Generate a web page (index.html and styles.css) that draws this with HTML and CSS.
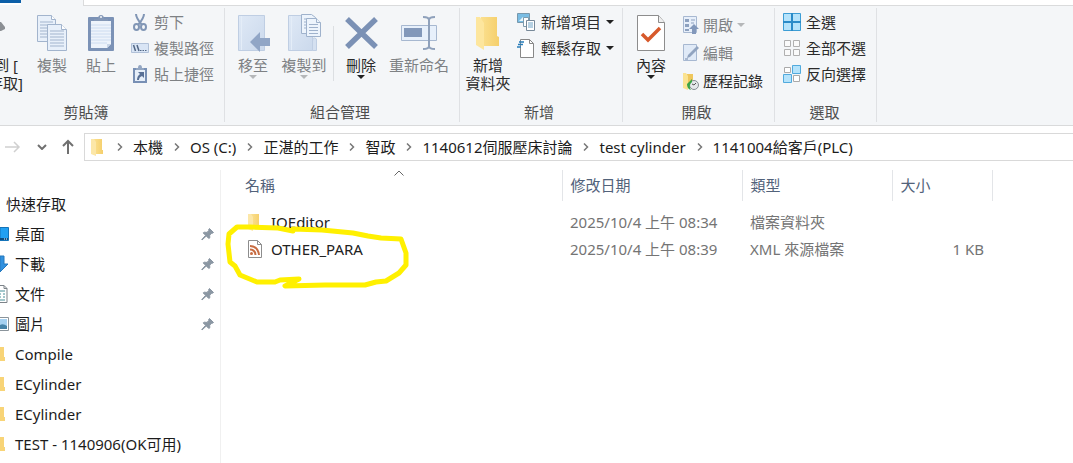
FILE: index.html
```html
<!DOCTYPE html>
<html lang="zh-Hant">
<head>
<meta charset="utf-8">
<title>1141004給客戶(PLC)</title>
<link rel="stylesheet" href="styles.css">
</head>
<body>
<svg class="defs" width="0" height="0" aria-hidden="true">
  <defs>
    <linearGradient id="gold" x1="0" x2="1"><stop offset="0" stop-color="#fbe08f"/><stop offset="1" stop-color="#f5cf6c"/></linearGradient>
    <linearGradient id="pale" x1="0" x2="1" y2="1"><stop offset="0" stop-color="#dfe9f6"/><stop offset="1" stop-color="#cbd9ec"/></linearGradient>
    <symbol id="folder" viewBox="0 0 16 18"><path d="M4 1h8v11h1v4H4z" fill="url(#gold)"/><path d="M1 1h3l2 3v14l-5-2z" fill="#fce7a8"/></symbol>
    <symbol id="pin" viewBox="0 0 14 14"><path d="M8.500 1.500 12.500 5.500 11.500 6.200 10.800 6 8.700 8.200 8.800 10.800 7.800 11.500 5.300 9 1 13 .8 12.600 4.600 8.300 2.200 5.900 3.200 5.200 6 5.400 8 3.200 7.700 2.300z" fill="#8b97a3" stroke="#8b97a3"/></symbol>
    <symbol id="chev" viewBox="0 0 6 8"><path d="M1 .5 4.500 4 1 7.500" fill="none" stroke="#777" stroke-width="1.500"/></symbol>
  </defs>
</svg>
<div class="window">
  <div class="tabs"><span class="tab-file"></span><span class="tab-active"></span><span class="tab-rest"></span></div>
  <div class="ribbon">
    <section class="group clipboard">
      <div class="tools">
        <button class="big pin-quick"><svg class="pic" width="24" height="38" viewBox="0 0 24 38"><path d="M0 8h2l4 5v2l-4 2H0z" fill="#8b8f94"/></svg><span class="short">到 [</span><span>存取]</span></button>
        <button class="big copy off"><svg class="pic" width="32" height="38" viewBox="0 0 32 38"><g fill="#e8f0fa" stroke="#a2b4cd"><path d="M1.500 1.500h14l4 4v22h-18z"/><path d="M15.500 1.500v4h4" fill="#fff"/><path d="M4 8h13M4 11h13M4 14h7M4 17h7M4 20h7M4 23h7"/><path d="M11.500 10.500h14l5 5v21h-19z"/><path d="M25.500 10.500v5h5" fill="#fff"/><path d="M14 17h14M14 20h14M14 23h14M14 26h14M14 29h14M14 32h14"/></g></svg><span>複製</span></button>
        <button class="big paste off"><svg class="pic" width="28" height="38" viewBox="0 0 28 38"><rect x="1" y="3" width="26" height="34" rx="1" fill="#7b92b6"/><path d="M4 7h20v23l-4 4H4z" fill="#edf3fb"/><path d="M24 30h-4v4z" fill="#c9d6e8"/><path d="M4 11h20M4 14h20M4 17h20M4 20h20M4 23h20M4 26h20M4 29h16" stroke="#cddcf0"/><path d="M7 7V5h4q0-4 3-4t3 4h4v2z" fill="#8498b7"/><circle cx="14" cy="3" r="1" fill="#f4f6f8"/></svg><span>貼上</span></button>
        <div class="stack">
          <button class="small off"><svg width="18" height="18" viewBox="0 0 18 18" fill="none" stroke="#8196b5" stroke-width="2"><path d="M5 1q0 4 6 11M13 1q0 4-6 11"/><ellipse cx="5.500" cy="14" rx="2.500" ry="3"/><ellipse cx="12.500" cy="14" rx="2.500" ry="3"/></svg>剪下</button>
          <button class="small off"><svg width="18" height="12" viewBox="0 0 18 12"><path d="M.5 1.500h17v9H.5z" fill="#d9e5f5" stroke="#b1c1d8"/><path d="m2.500 3 2 6m1.500-6 2 6" fill="none" stroke="#526785" stroke-width="1.500"/><path d="M9 8.500h1.500m1 0H13m1 0h1.500" stroke="#526785"/></svg>複製路徑</button>
          <button class="small off"><svg width="18" height="19" viewBox="0 0 18 19"><path d="M2 3h14v15H2z" fill="#7890b5"/><path d="M4 5h10v11H4z" fill="#e6effa"/><path d="M5 5V3h2q0-3 2-3t2 3h2v2z" fill="#93a6c2"/><path d="M7 7h6v6l-2-2q-3 1-3 4H6q0-4 3-6z" fill="#587096"/></svg>貼上捷徑</button>
        </div>
      </div>
      <div class="caption">剪貼簿</div>
    </section>
    <section class="group organize">
      <div class="tools">
        <button class="big w48 off"><svg class="pic" width="34" height="38" viewBox="0 0 34 38"><path d="M2.500 1.500h26v35h-26z" fill="url(#pale)" stroke="#bfcee3"/><path d="M5.500 2v34" stroke="#e4edf8"/><path d="m14 28 10-10v6h10v8H24v6z" fill="#91a6c6"/></svg><span>移至</span><i class="caret"></i></button>
        <button class="big w54 off"><svg class="pic" width="38" height="38" viewBox="0 0 38 38"><path d="M3.500 1.500h24v35h-24z" fill="url(#pale)" stroke="#bfcee3"/><path d="M6.500 2v34" stroke="#e4edf8"/><path d="M27.500 36.500h4V25q-4-3-4 2z" fill="#d4e0f0" stroke="#bfcee3"/><g fill="#edf4fc" stroke="#9fb2cc"><path d="M16.500.5h10l4 3v16h-14z"/><path d="M19 5h9M19 8h2M19 11h2M19 14h2"/><path d="M21.500 4.500h10l4 4v14h-14z"/><path d="M31.500 4.500v4h4"/><path d="M24 10.500h9M24 13.500h9M24 16.500h9M24 19.500h9"/></g></svg><span>複製到</span><i class="caret"></i></button>
        <span class="rule"></span>
        <button class="big w50"><svg class="pic" width="34" height="38" viewBox="0 0 34 38"><path d="M3 5 32 33M32 5 3 33" stroke="#7b91b5" stroke-width="5.500"/></svg><span>刪除</span><i class="caret"></i></button>
        <button class="big w66 off"><svg class="pic" width="38" height="38" viewBox="0 0 38 38"><path d="M1.500 11.500h35v15h-35z" fill="#e7f0fb" stroke="#a7b8d0"/><path d="M4 14h18v9H4z" fill="#8298ba"/><path d="M29 4v30M23 3q6 0 6 3 0-3 6-3M23 35q6 0 6-3 0 3 6 3" fill="none" stroke="#8fa1bb" stroke-width="2"/></svg><span>重新命名</span></button>
      </div>
      <div class="caption">組合管理</div>
    </section>
    <section class="group create">
      <div class="tools">
        <button class="big w50"><svg class="pic" width="26" height="38" viewBox="0 0 26 38"><path d="M6 3h16v19l2 1v9H6z" fill="url(#gold)"/><path d="M1 3h4l4 6v27l-8-5z" fill="#fde69e"/></svg><span>新增</span><span>資料夾</span></button>
        <div class="stack">
          <button class="small"><svg width="19" height="18" viewBox="0 0 19 18"><path d="M.5.5h12v9H.5z" fill="#79bde4" stroke="#7798ad"/><path d="m2 8 4-4 5 4z" fill="#e9f6fb"/><path d="M6.500 4.500h5v9h-5z" fill="#fff" stroke="#7d9caf"/><path d="M9.500 7.500h8v10h-8z" fill="#fff" stroke="#778999"/><path d="M11 10h5m-5 2h5m-5 2h5" stroke="#6ea4c7"/></svg>新增項目<i class="caret"></i></button>
          <button class="small"><svg width="19" height="19" viewBox="0 0 19 19"><path d="M3.500.5h9l4 4v14h-13z" fill="#fff" stroke="#888"/><path d="M12.500.5v4h4" fill="none" stroke="#888"/><path d="M2 3h5M1 5.500h5M0 8h4" stroke="#287db9" stroke-width="1.500"/></svg>輕鬆存取<i class="caret"></i></button>
        </div>
      </div>
      <div class="caption">新增</div>
    </section>
    <section class="group open">
      <div class="tools">
        <button class="big w50"><svg class="pic" width="30" height="38" viewBox="0 0 30 38"><path d="M1.500 1.500h21l6 7v28h-27z" fill="#fff" stroke="#8d8d8d"/><path d="M22.500 1.500v7h6" fill="#eee" stroke="#8d8d8d"/><path d="m6 20 6 6 12-12" fill="none" stroke="#d7592b" stroke-width="3.500"/></svg><span>內容</span><i class="caret"></i></button>
        <div class="stack loose">
          <button class="small off"><svg width="16" height="18" viewBox="0 0 16 18"><path d="M.5.5h13v16H.5z" fill="#e7effa" stroke="#a7b8d1"/><path d="M2 3h4v3H2zm0 5h4v3H2zm0 5h4v2H2z" fill="#8da1bf"/><path d="M8 4h4M8 7h3" stroke="#8da1bf"/><path d="m11 8 5 5h-3v5H9v-5H6z" fill="#8298bb"/></svg>開啟<i class="caret"></i></button>
          <button class="small off"><svg width="16" height="18" viewBox="0 0 16 18"><path d="M.5.5h13v16H.5z" fill="#e0eaf7" stroke="#a7b8d1"/><path d="m4 14 1-3 9-9 2 2-9 9z" fill="#91a4c0"/><path d="M2 15h3" stroke="#7489ab"/></svg>編輯</button>
          <button class="small"><svg width="16" height="19" viewBox="0 0 16 19"><path d="M4 2h6v14H4z" fill="#efc75d"/><path d="M0 1h3l2 3v14l-5-2z" fill="#fbe391"/><circle cx="11" cy="13" r="4.500" fill="#e4e8eb" stroke="#858d93"/><path d="m11 13 2-2m-2 2-2-1" stroke="#555"/><path d="m4 12 5-5v3q-4 3-1 8-4-1-4-6z" fill="#39a447"/></svg>歷程記錄</button>
        </div>
      </div>
      <div class="caption">開啟</div>
    </section>
    <section class="group select">
      <div class="tools">
        <div class="stack">
          <button class="small"><svg width="18" height="18" viewBox="0 0 18 18"><path d="M.5.500h17v17H.5z" fill="#b5e3fb" stroke="#3c9dd5"/><path d="M9 0v18M0 9h18" stroke="#2b8bc8" stroke-width="2"/></svg>全選</button>
          <button class="small"><svg width="18" height="18" viewBox="0 0 18 18" fill="#fafafa" stroke="#b0b0b0"><path d="M1.500 1.500h6v6h-6zm9 0h6v6h-6zm-9 9h6v6h-6zm9 0h6v6h-6z"/></svg>全部不選</button>
          <button class="small"><svg width="18" height="18" viewBox="0 0 18 18"><path d="M1.500 2.500h6v5h-6zm9 8h6v6h-6z" fill="#fff" stroke="#aaa"/><path d="M9.500.5h8v8h-8zm-9 9h8v8h-8z" fill="#b5e3fb" stroke="#51aadd"/></svg>反向選擇</button>
        </div>
      </div>
      <div class="caption">選取</div>
    </section>
  </div>

  <nav class="navbar">
    <button class="arrow" aria-label="下一頁"><svg width="16" height="12" viewBox="0 0 16 12"><path d="M0 6h14M9 1l5 5-5 5" fill="none" stroke="#d0d0d0" stroke-width="1.500"/></svg></button>
    <button class="arrow recent" aria-label="最近的位置"><svg width="10" height="6" viewBox="0 0 10 6"><path d="m1 1 4 4 4-4" fill="none" stroke="#707070" stroke-width="2"/></svg></button>
    <button class="arrow" aria-label="上一層"><svg width="12" height="16" viewBox="0 0 12 16"><path d="M6 15V2M1 7l5-5 5 5" fill="none" stroke="#707070" stroke-width="2"/></svg></button>
    <div class="address">
      <svg width="16" height="18"><use href="#folder"/></svg>
      <svg class="sep" width="6" height="8"><use href="#chev"/></svg><a href="#">本機</a>
      <svg class="sep" width="6" height="8"><use href="#chev"/></svg><a href="#">OS (C:)</a>
      <svg class="sep" width="6" height="8"><use href="#chev"/></svg><a href="#">正湛的工作</a>
      <svg class="sep" width="6" height="8"><use href="#chev"/></svg><a href="#">智政</a>
      <svg class="sep" width="6" height="8"><use href="#chev"/></svg><a href="#">1140612伺服壓床討論</a>
      <svg class="sep" width="6" height="8"><use href="#chev"/></svg><a href="#">test cylinder</a>
      <svg class="sep" width="6" height="8"><use href="#chev"/></svg><a href="#">1141004給客戶(PLC)</a>
    </div>
  </nav>

  <div class="body">
    <aside class="sidebar">
      <a class="quick" href="#">快速存取</a>
      <a href="#"><svg width="9" height="14" viewBox="0 0 9 14"><path d="M0 .5h8.500v13H0z" fill="#22a0f2" stroke="#1473b8"/><path d="M0 12h8" stroke="#0b4d82" stroke-width="2"/><path d="M4 12h1m1 0h1" stroke="#fff"/></svg><span>桌面</span><svg class="pin" width="14" height="14"><use href="#pin"/></svg></a>
      <a href="#"><svg width="9" height="18" viewBox="0 0 9 18"><path d="M0 1h4v8h4l-8 8z" fill="#3191df" stroke="#2578bd"/></svg><span>下載</span><svg class="pin" width="14" height="14"><use href="#pin"/></svg></a>
      <a href="#"><svg width="9" height="18" viewBox="0 0 9 18"><path d="M0 .5h4l3 3v14H0" fill="#fff" stroke="#7c8389"/><path d="M4 .5v3h3" fill="none" stroke="#7c8389"/><path d="M0 6h5M0 9h1m2 0h2M0 12h1m2 0h2M0 15h5" stroke="#468e98"/></svg><span>文件</span><svg class="pin" width="14" height="14"><use href="#pin"/></svg></a>
      <a href="#"><svg width="9" height="14" viewBox="0 0 9 14"><path d="M0 .5h8.500v13H0" fill="#fff" stroke="#8b949b"/><path d="M0 2h7v10H0z" fill="#a6d1f1"/><path d="M0 8q3-2 7 1v3H0z" fill="#4783a8"/></svg><span>圖片</span><svg class="pin" width="14" height="14"><use href="#pin"/></svg></a>
      <a href="#"><svg width="9" height="16" viewBox="0 0 9 16"><path d="M0 1h4v10h1v4H0z" fill="#f8d477"/></svg><span>Compile</span></a>
      <a href="#"><svg width="9" height="16" viewBox="0 0 9 16"><path d="M0 1h4v10h1v4H0z" fill="#f8d477"/></svg><span>ECylinder</span></a>
      <a href="#"><svg width="9" height="16" viewBox="0 0 9 16"><path d="M0 1h4v10h1v4H0z" fill="#f8d477"/></svg><span>ECylinder</span></a>
      <a href="#"><svg width="9" height="16" viewBox="0 0 9 16"><path d="M0 1h4v10h1v4H0z" fill="#f8d477"/></svg><span>TEST - 1140906(OK可用)</span></a>
    </aside>
    <main class="files">
      <table>
        <colgroup><col class="c-name"><col class="c-date"><col class="c-type"><col class="c-size"></colgroup>
        <thead><tr>
          <th>名稱<svg class="sort" width="10" height="6" viewBox="0 0 10 6"><path d="m.5 5.500 4.500-4.500 4.500 4.500" fill="none" stroke="#666"/></svg></th><th>修改日期</th><th>類型</th><th>大小</th>
        </tr></thead>
        <tbody>
          <tr><td><div class="name"><svg width="16" height="18"><use href="#folder"/></svg>IOEditor</div></td><td>2025/10/4 上午 08:34</td><td>檔案資料夾</td><td></td></tr>
          <tr><td><div class="name"><svg width="16" height="18" viewBox="0 0 16 18"><path d="M1.500.5h9l4 4v13h-13z" fill="#fff" stroke="#8d8d8d"/><path d="M10.500.5v4h4" fill="none" stroke="#8d8d8d"/><g fill="none" stroke="#c86c42" stroke-width="2"><path d="M3 6q8 0 9 9M3 9.500q5 0 5.500 5.500"/></g><circle cx="4.500" cy="13.500" r="1.500" fill="#c86c42"/></svg>OTHER_PARA</div></td><td>2025/10/4 上午 08:39</td><td>XML 來源檔案</td><td class="size">1 KB</td></tr>
        </tbody>
      </table>
      <svg class="marker" width="200" height="80" viewBox="221 220 200 80"><path d="M293 231 278 228 250 227H237L229 234 228 244 230 262 235 266 240 275 257 282H275L280 280 299 279 293 282 285 286 325 285H365L376 282 386 281 399 273 406 265V253L401 239 381 238 368 236 353 233 322 230 293 229" fill="none" stroke="#fff000" stroke-width="5" stroke-linecap="round" stroke-linejoin="round"/></svg>
    </main>
  </div>
</div>
</body>
</html>
```
FILE: styles.css
```css
* { box-sizing: border-box; }
body {
  margin: 0;
  background: #fff;
  color: #1c1c1c;
  font: 15px/18px "Noto Sans", "Noto Sans CJK TC", sans-serif;
}
.defs { position: absolute; }
.window { min-height: 100vh; display: flex; flex-direction: column; overflow: hidden; }
svg { flex: none; display: block; }
a { color: inherit; text-decoration: none; }
button {
  border: 0;
  padding: 0;
  background: none;
  color: #2b2b2b;
  font: inherit;
  white-space: nowrap;
}

.tabs { display: flex; height: 6px; background: #f4f6f8; }
.tab-file { width: 21px; height: 3px; background: #0c5fa8; box-shadow: 0 2px #fff; }
.tab-active { width: 62px; background: #f4f6f8; }
.tab-rest { flex: 1; background: #fff; border: solid #dadbdc; border-width: 0 0 1px 1px; }

.ribbon { display: flex; background: #f4f6f8; border-bottom: 1px solid #d9dadb; padding: 2px 0 3px; }
.group { display: flex; flex-direction: column; border-right: 1px solid #dfe1e4; height: 114px; }
.tools { display: flex; flex: 1; }
.caption { text-align: center; color: #4e4e4e; padding: 0 2px 1px 0; }
.clipboard { width: 225px; }
.clipboard .caption { padding-right: 52px; }
.organize { width: 235px; }
.organize .caption { padding-right: 4px; }
.organize .tools { padding-left: 4px; }
.create { width: 163px; }
.create .caption { padding-right: 4px; }
.create .tools { padding-left: 3px; }
.open { width: 152px; }
.open .caption { padding-right: 4px; }
.open .tools { padding-left: 3px; }
.select { width: 102px; }
.select .tools { padding-left: 8px; }

.big { display: flex; flex-direction: column; align-items: center; padding-top: 6px; }
.big .pic { margin-bottom: 4px; }
.big .caret { margin-top: 1px; }
.w48 { width: 48px; }
.w50 { width: 50px; }
.w54 { width: 54px; }
.w66 { width: 66px; }
.copy { width: 58px; }
.paste { width: 40px; }
.pin-quick { width: 23px; align-items: flex-end; }
.pin-quick .short { padding-right: 5px; }
.off { color: #7e8184; }
.caret { border: 4px solid transparent; border-top-color: #222; border-bottom: 0; width: 8px; height: 4px; }
.off .caret { border-top-color: #b5b7b9; }
.rule { width: 1px; height: 55px; margin: 18px 2px 0; background: #dcdfe2; }

.stack { display: flex; flex-direction: column; }
.clipboard .stack { padding-left: 10px; }
.create .stack { padding-left: 4px; }
.open .stack { padding-left: 7px; }
.small { display: flex; align-items: center; gap: 5px; height: 26px; }
.tools .stack { padding-top: 1px; }
.tools .loose { padding-top: 3px; }
.loose .small { height: 28px; gap: 4px; }

.navbar { display: flex; align-items: center; height: 44px; padding: 7px 0 9px 5px; }
.arrow { display: flex; justify-content: center; width: 16px; }
.recent { margin: 0 10px 0 13px; }
.address {
  flex: 1;
  display: flex;
  align-items: center;
  align-self: stretch;
  margin-left: 8px;
  padding-left: 5px;
  border: solid #d9d9d9;
  border-width: 1px 0 1px 1px;
  white-space: nowrap;
}
.sep { margin: 0 10px 0 11px; }

.body { display: flex; flex: 1; }
.sidebar { width: 221px; border-right: 1px solid #f0f0f0; padding-top: 19px; }
.sidebar a { display: flex; align-items: center; gap: 6px; height: 30px; white-space: nowrap; }
.sidebar .quick { padding-left: 6px; }
.sidebar .pin { margin: 0 5px 0 auto; }

.files { flex: 1; position: relative; padding-left: 16px; }
table { table-layout: fixed; border-collapse: collapse; width: 755px; }
.c-name { width: 325px; }
.c-date { width: 180px; }
.c-type { width: 150px; }
.c-size { width: 100px; }
th {
  position: relative;
  height: 31px;
  padding: 0 8px 2px;
  border-right: 1px solid #e3e5e8;
  color: #52627a;
  font-weight: 400;
  text-align: left;
}
.sort { position: absolute; top: 0; left: calc(50% - 5px); }
tbody::before { content: ""; display: table-row; height: 7px; }
td { height: 27px; padding: 0 8px; color: #747474; white-space: nowrap; }
.name { display: flex; align-items: center; gap: 8px; padding-left: 2px; color: #222; }
.size { text-align: right; }
.marker { position: absolute; left: 0; top: 50px; pointer-events: none; }
```
